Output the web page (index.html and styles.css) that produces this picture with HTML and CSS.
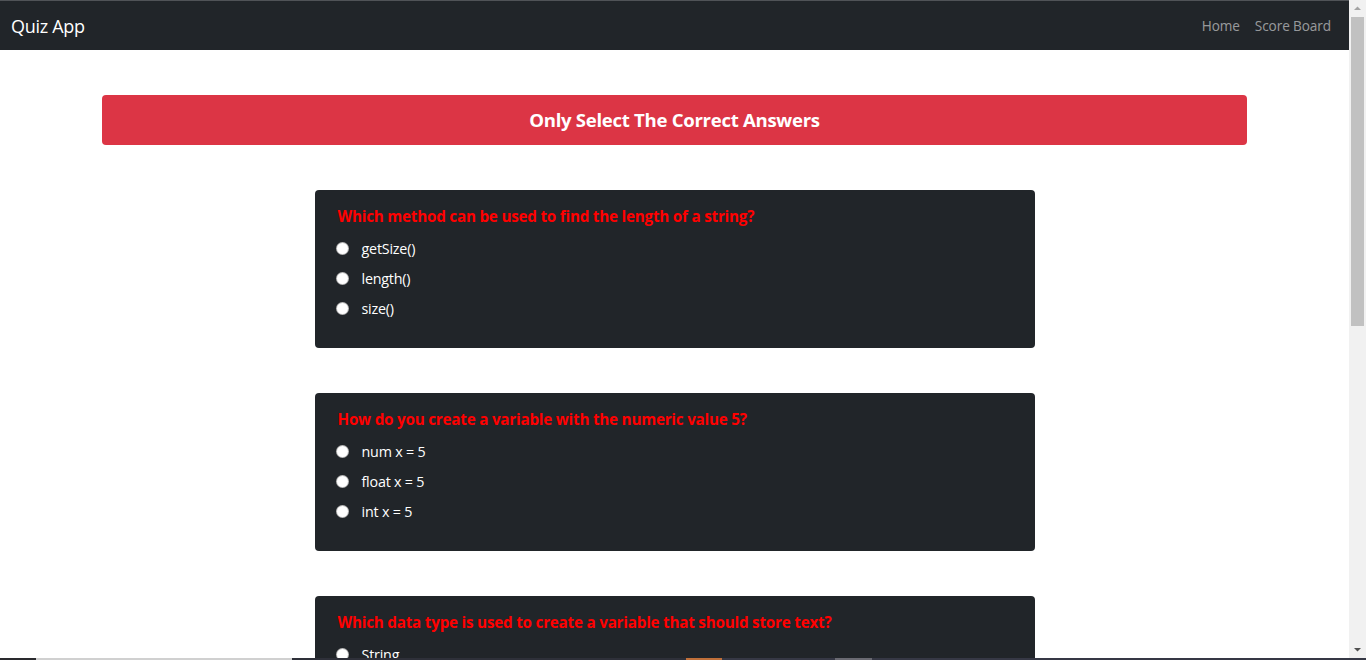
FILE: index.html
```html
<!DOCTYPE html>
<html>
<head>
<meta charset="utf-8">
<link rel="stylesheet" href="styles.css">
</head>
<body>
<nav class="navbar">
  <a class="brand">Quiz App</a>
  <div class="nav-links">
    <a class="nav-link">Home</a>
    <a class="nav-link">Score Board</a>
  </div>
</nav>
<main class="container">
  <div class="banner">Only Select The Correct Answers</div>
  <div class="quiz-list">
    <div class="card">
      <h3 class="question">Which method can be used to find the length of a string?</h3>
      <label class="option"><span class="radio"></span>getSize()</label>
      <label class="option"><span class="radio"></span>length()</label>
      <label class="option"><span class="radio"></span>size()</label>
    </div>
    <div class="card">
      <h3 class="question">How do you create a variable with the numeric value 5?</h3>
      <label class="option"><span class="radio"></span>num x = 5</label>
      <label class="option"><span class="radio"></span>float x = 5</label>
      <label class="option"><span class="radio"></span>int x = 5</label>
    </div>
    <div class="card">
      <h3 class="question">Which data type is used to create a variable that should store text?</h3>
      <label class="option"><span class="radio"></span>String</label>
      <label class="option"><span class="radio"></span>myString</label>
      <label class="option"><span class="radio"></span>string</label>
    </div>
  </div>
</main>
<div class="scrollbar">
  <div class="sb-btn"><svg width="17" height="17" viewBox="0 0 17 17"><path d="M5 10 L8.5 6.5 L12 10 Z" fill="#a3a3a3"/></svg></div>
  <div class="sb-track"><div class="sb-thumb"></div></div>
  <div class="sb-btn"><svg width="17" height="17" viewBox="0 0 17 17"><path d="M5 7 L12 7 L8.5 10.5 Z" fill="#505050"/></svg></div>
</div>
<div class="taskbar">
  <span class="seg seg-a"></span><span class="seg seg-b"></span><span class="seg seg-c"></span><span class="seg seg-d"></span><span class="seg seg-c2"></span><span class="seg seg-e"></span><span class="seg seg-f"></span>
</div>
</body>
</html>
```
FILE: styles.css
```css
html { overflow: hidden; }
html, body { margin: 0; padding: 0; }
body {
  font-family: "Open Sans", "Noto Sans", sans-serif;
  background: #fff;
  color: #212529;
  margin-right: 17px;
}
.navbar {
  height: 49px;
  border-top: 1px solid #505357;
  background: #212529;
  display: flex;
  align-items: center;
  justify-content: space-between;
  padding: 0 18px 0 11px;
}
.brand {
  color: #fff;
  font-size: 18px;
  letter-spacing: -0.3px;
}
.nav-links { display: flex; gap: 15px; }
.nav-link {
  color: rgba(255,255,255,0.55);
  font-size: 13.6px;
  letter-spacing: -0.1px;
}
.container {
  width: 1145px;
  margin: 45px auto 0;
}
.banner {
  background: #dc3545;
  color: #fff;
  border-radius: 4px;
  height: 48px;
  padding-bottom: 2px;
  display: flex;
  align-items: center;
  justify-content: center;
  font-size: 18.6px;
  font-weight: 700;
  letter-spacing: -0.3px;
}
.quiz-list {
  display: flex;
  flex-direction: column;
  align-items: center;
  gap: 45px;
  margin-top: 45px;
  padding-bottom: 60px;
}
.card {
  width: 720px;
  box-sizing: border-box;
  background: #212529;
  border-radius: 4px;
  padding: 14px 23px 25px;
  display: flex;
  flex-direction: column;
}
.question {
  margin: 0 0 5px;
  color: #ff0000;
  font-size: 15.2px;
  font-weight: 700;
  line-height: 24px;
  letter-spacing: -0.2px;
}
.option {
  display: flex;
  align-items: center;
  height: 30px;
  color: #fff;
  font-size: 14.3px;
  letter-spacing: -0.2px;
}
.radio {
  width: 11px;
  height: 11px;
  border-radius: 50%;
  background: #fff;
  box-shadow: 0 0 0 1px #b8b8b8;
  margin: 0 14px 0 -1px;
}
.scrollbar {
  position: fixed;
  top: 0;
  right: 0;
  width: 17px;
  height: 658px;
  background: #f1f1f1;
  display: flex;
  flex-direction: column;
}
.sb-btn { height: 17px; display: flex; }
.sb-track { flex: 1; }
.sb-thumb {
  margin: 0 2px;
  height: 309px;
  background: #c1c1c1;
}
.taskbar {
  position: fixed;
  left: 0;
  right: 0;
  bottom: 0;
  height: 2px;
  display: flex;
  background: #363845;
}
.seg { display: block; height: 2px; }
.seg-a { width: 36px; background: #2a2a2e; }
.seg-b { width: 256px; background: #d0d0d0; }
.seg-c { width: 394px; background: #2e3039; }
.seg-d { width: 36px; background: #c0703a; }
.seg-c2 { width: 113px; background: #363845; }
.seg-e { width: 37px; background: #6a6a72; }
.seg-f { flex: 1; background: #363845; }
```
